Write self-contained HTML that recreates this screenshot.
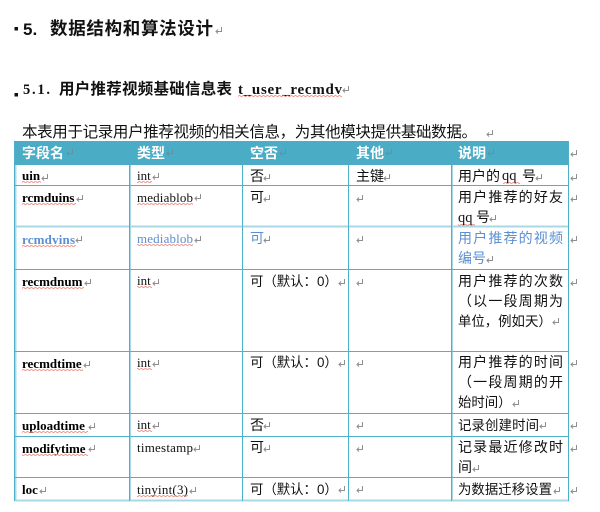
<!DOCTYPE html>
<html><head><meta charset="utf-8"><style>
html,body{margin:0;padding:0;background:#fff;width:600px;height:512px;overflow:hidden}
svg{display:block;filter:blur(.35px)}
text{fill:#111;white-space:pre}
.c{font:14px "Liberation Sans","Noto Sans CJK SC",sans-serif}
.d{font:13.4px "Liberation Sans","Noto Sans CJK SC",sans-serif}
.h{font:bold 14px "Liberation Sans","Noto Sans CJK SC",sans-serif;fill:#fff}
.b{font:bold 13px "Liberation Serif",serif;fill:#000}
.l{font:13px "Liberation Serif",serif}
.q{font:14.5px "Liberation Serif",serif}
.u{fill:#5b8fd0}
</style></head><body>
<svg width="600" height="512" viewBox="0 0 600 512" xmlns="http://www.w3.org/2000/svg">
<defs>
<pattern id="w" width="4" height="2" patternUnits="userSpaceOnUse"><path d="M0 1.5L1 .5L2 .5L3 1.5L4 1.5" fill="none" stroke="#ee7a6a" stroke-width=".7"/></pattern>
<symbol id="r" overflow="visible"><path d="M6.5 0V4.5H1M3 2.5L1 4.5L3 6.5" fill="none" stroke="#8f8f8f" stroke-width="1"/></symbol>
<symbol id="s" overflow="visible"><path d="M6.5 0V4.5H1M3 2.5L1 4.5L3 6.5" fill="none" stroke="#6d8f9c" stroke-width="1"/></symbol>
</defs>
<rect width="600" height="512" fill="#fff"/>

<rect x="14.5" y="27" width="3.500" height="3.500" fill="#111"/>
<rect x="14.5" y="93" width="3.500" height="3.500" fill="#111"/>
<text x="23" y="35" style="font:bold 17px 'Liberation Sans','Noto Sans CJK SC',sans-serif">5.</text>
<text x="50" y="34.500" textLength="163" lengthAdjust="spacing" style="font:bold 17.500px 'Liberation Sans','Noto Sans CJK SC',sans-serif">数据结构和算法设计</text>
<use href="#r" x="215" y="27"/>

<text x="23" y="94" textLength="27" lengthAdjust="spacing" style="font:bold 14.500px 'Liberation Serif',serif">5.1.</text>
<text x="59" y="94" textLength="173" lengthAdjust="spacing" style="font:bold 15.500px 'Liberation Sans','Noto Sans CJK SC',sans-serif">用户推荐视频基础信息表</text>
<text x="238" y="94" textLength="104" lengthAdjust="spacing" style="font:bold 15px 'Liberation Serif',serif">t_user_recmdv</text>
<rect x="238" y="95" width="104" height="2" fill="url(#w)"/>
<use href="#r" x="342" y="86"/>

<text x="22" y="137" textLength="455" lengthAdjust="spacing" style="font:15.500px 'Liberation Sans','Noto Sans CJK SC',sans-serif">本表用于记录用户推荐视频的相关信息，为其他模块提供基础数据。</text>
<use href="#r" x="486" y="130"/>

<!-- table -->
<rect x="15" y="141" width="554" height="24" fill="#4bacc6"/>
<g stroke="#a8d8e6" stroke-width="2" fill="none">
<path d="M15.500 165V501M15 500.500H569M452 165V501M130 165V501"/>
<path d="M15 226.500H569"/>
</g>
<g stroke="#4fb0ca" stroke-width="1" fill="none">
<path d="M14.500 141V501M129.500 165V501M242.500 165V501M348.500 165V501M451.500 165V501M568.500 141V501"/>
<path d="M15 185.500H569M15 269.500H569M15 351.500H569M15 413.500H569M15 436.500H569M15 477.500H569"/>
</g>

<!-- header -->
<text class="h" x="22" y="158">字段名</text><use href="#s" x="66" y="149"/>
<text class="h" x="137" y="158">类型</text><use href="#s" x="166" y="149"/>
<text class="h" x="250" y="158">空否</text><use href="#s" x="279" y="149"/>
<text class="h" x="356" y="158">其他</text><use href="#s" x="385" y="149"/>
<text class="h" x="458" y="158">说明</text><use href="#s" x="487" y="149"/>
<use href="#r" x="570" y="150"/>

<!-- row 1 -->
<text class="b" x="22" y="180">uin</text><rect x="22" y="181" width="19" height="2" fill="url(#w)"/><use href="#r" x="41" y="174"/>
<text class="l" x="137" y="180">int</text><rect x="137" y="181" width="15" height="2" fill="url(#w)"/><use href="#r" x="152" y="173"/>
<text class="c" x="250" y="181">否</text><use href="#r" x="263" y="174"/>
<text class="c" x="356" y="181">主键</text><use href="#r" x="383" y="174"/>
<text class="c" x="458" y="181">用户的</text><text class="q" x="502" y="180">qq</text><rect x="503" y="182" width="17" height="2" fill="url(#w)"/><text class="c" x="522" y="181">号</text><use href="#r" x="535" y="174"/>
<use href="#r" x="570" y="174"/>

<!-- row 2 -->
<text class="b" x="22" y="202">rcmduins</text><rect x="22" y="203" width="54" height="2" fill="url(#w)"/><use href="#r" x="76" y="195"/>
<text class="l" x="137" y="202" textLength="56" lengthAdjust="spacing">mediablob</text><rect x="137" y="203" width="56" height="2" fill="url(#w)"/><use href="#r" x="194" y="194"/>
<text class="c" x="250" y="202">可</text><use href="#r" x="263" y="195"/>
<use href="#r" x="356" y="195"/>
<text class="c" x="458" y="202" textLength="105" lengthAdjust="spacing">用户推荐的好友</text>
<use href="#r" x="570" y="195"/>
<text class="q" x="458" y="222">qq</text><rect x="458" y="224" width="17" height="2" fill="url(#w)"/><text class="c" x="476" y="222">号</text><use href="#r" x="489" y="215"/>

<!-- row 3 -->
<text class="b u" x="22" y="244" textLength="53" lengthAdjust="spacing">rcmdvins</text><rect x="22" y="245" width="54" height="2" fill="url(#w)"/><use href="#r" x="75" y="236"/>
<text class="l u" x="137" y="243" textLength="56" lengthAdjust="spacing">mediablob</text><rect x="137" y="244" width="56" height="2" fill="url(#w)"/><use href="#r" x="194" y="236"/>
<text class="c u" x="250" y="243">可</text><use href="#r" x="263" y="236"/>
<use href="#r" x="356" y="236"/>
<text class="c u" x="458" y="243" textLength="105" lengthAdjust="spacing">用户推荐的视频</text>
<use href="#r" x="570" y="236"/>
<text class="c u" x="458" y="263">编号</text><use href="#r" x="486" y="256"/>

<!-- row 4 -->
<text class="b" x="22" y="286">recmdnum</text><rect x="22" y="287" width="62" height="2" fill="url(#w)"/><use href="#r" x="84" y="279"/>
<text class="l" x="137" y="285">int</text><rect x="137" y="286" width="15" height="2" fill="url(#w)"/><use href="#r" x="152" y="279"/>
<text class="d" x="250" y="286">可（默认：0）</text><use href="#r" x="338" y="279"/>
<use href="#r" x="356" y="279"/>
<text class="c" x="458" y="286" textLength="105" lengthAdjust="spacing">用户推荐的次数</text>
<use href="#r" x="570" y="279"/>
<text class="c" x="458" y="306" textLength="105" lengthAdjust="spacing">（以一段周期为</text>
<text class="d" x="458" y="326">单位，例如天）</text><use href="#r" x="552" y="318"/>

<!-- row 5 -->
<text class="b" x="22" y="368">recmdtime</text><rect x="22" y="369" width="61" height="2" fill="url(#w)"/><use href="#r" x="83" y="361"/>
<text class="l" x="137" y="367">int</text><rect x="137" y="368" width="15" height="2" fill="url(#w)"/><use href="#r" x="152" y="360"/>
<text class="d" x="250" y="367">可（默认：0）</text><use href="#r" x="338" y="360"/>
<use href="#r" x="356" y="360"/>
<text class="c" x="458" y="367" textLength="105" lengthAdjust="spacing">用户推荐的时间</text>
<use href="#r" x="570" y="360"/>
<text class="c" x="458" y="387" textLength="105" lengthAdjust="spacing">（一段周期的开</text>
<text class="d" x="458" y="407">始时间）</text><use href="#r" x="512" y="400"/>

<!-- row 6 -->
<text class="b" x="22" y="430">uploadtime</text><rect x="22" y="431" width="66" height="2" fill="url(#w)"/><use href="#r" x="88" y="423"/>
<text class="l" x="137" y="429">int</text><rect x="137" y="430" width="15" height="2" fill="url(#w)"/><use href="#r" x="152" y="422"/>
<text class="c" x="250" y="430">否</text><use href="#r" x="263" y="422"/>
<use href="#r" x="356" y="422"/>
<text class="d" x="458" y="430" textLength="81" lengthAdjust="spacing">记录创建时间</text><use href="#r" x="539" y="422"/>
<use href="#r" x="570" y="422"/>

<!-- row 7 -->
<text class="b" x="22" y="453">modifytime</text><rect x="22" y="454" width="66" height="2" fill="url(#w)"/><use href="#r" x="88" y="445"/>
<text class="l" x="137" y="452" textLength="56" lengthAdjust="spacing">timestamp</text><use href="#r" x="193" y="445"/>
<text class="c" x="250" y="452">可</text><use href="#r" x="263" y="445"/>
<use href="#r" x="356" y="445"/>
<text class="c" x="458" y="452" textLength="105" lengthAdjust="spacing">记录最近修改时</text>
<use href="#r" x="570" y="445"/>
<text class="c" x="458" y="472">间</text><use href="#r" x="472" y="465"/>

<!-- row 8 -->
<text class="b" x="22" y="494">loc</text><use href="#r" x="39" y="487"/>
<text class="l" x="137" y="494" textLength="51" lengthAdjust="spacing">tinyint(3)</text><rect x="137" y="495" width="51" height="2" fill="url(#w)"/><use href="#r" x="189" y="487"/>
<text class="d" x="250" y="494">可（默认：0）</text><use href="#r" x="338" y="486"/>
<use href="#r" x="356" y="486"/>
<text class="d" x="458" y="494" textLength="94" lengthAdjust="spacing">为数据迁移设置</text><use href="#r" x="553" y="487"/>
<use href="#r" x="570" y="487"/>
</svg>
</body></html>
